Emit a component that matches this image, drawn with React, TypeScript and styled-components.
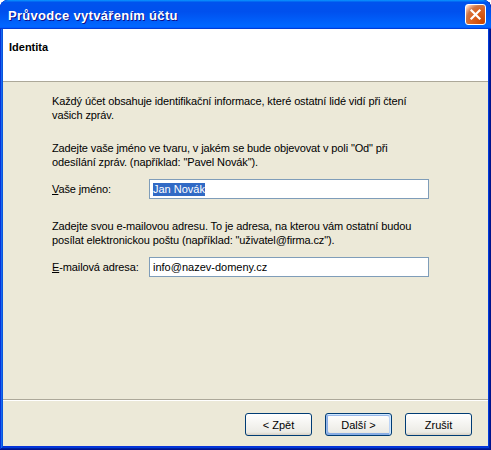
import React from "react";
import styled, { createGlobalStyle } from "styled-components";

const GlobalStyle = createGlobalStyle`
  html, body {
    margin: 0;
    padding: 0;
    background: #ffffff;
  }
  body {
    font-family: "Liberation Sans", Arial, sans-serif;
    font-size: 11px;
  }
`;

const Window = styled.div`
  width: 491px;
  height: 450px;
  box-sizing: border-box;
  display: flex;
  flex-direction: column;
  background: #0831d9;
  border-radius: 8px 8px 0 0;
  overflow: hidden;
  box-shadow: inset -1px -1px #00138c, inset 1px 1px #0831d9,
    inset -2px -2px #001ea0, inset 2px 2px #166aee, inset -3px -3px #003bda,
    inset 3px 3px #0855dd;
  padding-bottom: 4px;
`;

const TitleBar = styled.div`
  height: 29px;
  flex: none;
  display: flex;
  align-items: center;
  justify-content: space-between;
  padding: 0 5px 0 8px;
  background: linear-gradient(
    180deg,
    #0997ff,
    #0053ee 8%,
    #0050ee 40%,
    #06f 88%,
    #06f 93%,
    #005bff 95%,
    #003dd7 96%,
    #003dd7
  );
  border-radius: 8px 8px 0 0;
`;

const TitleText = styled.span`
  color: #ffffff;
  font-family: "Liberation Sans", Arial, sans-serif;
  font-weight: bold;
  font-size: 13px;
  letter-spacing: 0.3px;
  text-shadow: 1px 1px #0f1089;
  margin-top: 1px;
`;

const CloseButton = styled.button`
  width: 21px;
  height: 21px;
  padding: 0;
  display: flex;
  align-items: center;
  justify-content: center;
  border: 1px solid #ffffff;
  border-radius: 3px;
  background: radial-gradient(
    circle at 90% 90%,
    #cc4600 0%,
    #dc6527 55%,
    #cd7546 70%,
    #ffccb2 90%,
    #ffffff 100%
  );
  box-sizing: border-box;
`;

const Client = styled.div`
  flex: 1;
  margin: 0 3px;
  display: flex;
  flex-direction: column;
  background: #ece9d8;
`;

const Header = styled.div`
  height: 52px;
  box-sizing: content-box;
  background: #ffffff;
  border-bottom: 1px solid #aca899;
  padding: 0 6px;
  display: flex;
  align-items: flex-start;
`;

const HeaderTitle = styled.div`
  margin-top: 11px;
  line-height: 14px;
  font-weight: bold;
  font-size: 11px;
  color: #000000;
`;

const Body = styled.div`
  flex: 1;
  padding: 12px 0 0 49px;
  display: flex;
  flex-direction: column;
`;

const Paragraph = styled.p<{ $after: number }>`
  margin: 0 0 ${(p) => p.$after}px;
  line-height: 14px;
  color: #000000;
  letter-spacing: -0.12px;
`;

const FieldRow = styled.div<{ $after: number }>`
  display: flex;
  align-items: center;
  margin-bottom: ${(p) => p.$after}px;
`;

const Label = styled.label`
  width: 97px;
  flex: none;
  color: #000000;
  letter-spacing: -0.12px;
`;

const Key = styled.span`
  text-decoration: underline;
  text-underline-offset: 1px;
`;

const TextBox = styled.div`
  width: 280px;
  height: 20px;
  box-sizing: border-box;
  border: 1px solid #7f9db9;
  background: #ffffff;
  display: flex;
  align-items: center;
  padding-left: 3px;
  color: #000000;
`;

const Selected = styled.span`
  background: #316ac5;
  color: #ffffff;
  line-height: 13px;
`;

const Footer = styled.div`
  flex: none;
  height: 47px;
  border-top: 1px solid #aca899;
  box-shadow: inset 0 1px #ffffff;
  display: flex;
  justify-content: flex-end;
  align-items: flex-start;
  gap: 13px;
  padding: 13px 16px 0 0;
  box-sizing: border-box;
`;

const Button = styled.button<{ $default?: boolean }>`
  width: 67px;
  height: 23px;
  box-sizing: border-box;
  padding: 0;
  font-family: "Liberation Sans", Arial, sans-serif;
  font-size: 11px;
  color: #000000;
  border: 1px solid #003c74;
  border-radius: 3px;
  background: linear-gradient(180deg, #ffffff, #ecebe5 86%, #d8d0c4);
  box-shadow: ${(p) =>
    p.$default
      ? "inset -1px 1px #cee7ff, inset 1px 2px #98b8ea, inset -2px 2px #bcd4f6, inset 1px -1px #89ade4, inset 2px -2px #89ade4"
      : "none"};
`;

export default function App() {
  return (
    <>
      <GlobalStyle />
      <Window>
        <TitleBar>
          <TitleText>Průvodce vytvářením účtu</TitleText>
          <CloseButton aria-label="Zavřít">
            <svg width="13" height="13" viewBox="0 0 13 13">
              <path
                d="M2.5 2.5 L10.5 10.5 M10.5 2.5 L2.5 10.5"
                stroke="#ffffff"
                strokeWidth="2.2"
                strokeLinecap="square"
              />
            </svg>
          </CloseButton>
        </TitleBar>
        <Client>
          <Header>
            <HeaderTitle>Identita</HeaderTitle>
          </Header>
          <Body>
            <Paragraph $after={19}>
              Každý účet obsahuje identifikační informace, které ostatní lidé vidí při čtení
              <br />
              vašich zpráv.
            </Paragraph>
            <Paragraph $after={10}>
              Zadejte vaše jméno ve tvaru, v jakém se bude objevovat v poli "Od" při
              <br />
              odesílání zpráv. (například: "Pavel Novák").
            </Paragraph>
            <FieldRow $after={20}>
              <Label>
                <Key>V</Key>aše jméno:
              </Label>
              <TextBox>
                <Selected>Jan Novák</Selected>
              </TextBox>
            </FieldRow>
            <Paragraph $after={10}>
              Zadejte svou e-mailovou adresu. To je adresa, na kterou vám ostatní budou
              <br />
              posílat elektronickou poštu (například: "uživatel@firma.cz").
            </Paragraph>
            <FieldRow $after={0}>
              <Label>
                <Key>E</Key>-mailová adresa:
              </Label>
              <TextBox>info@nazev-domeny.cz</TextBox>
            </FieldRow>
          </Body>
          <Footer>
            <Button>&lt; Zpět</Button>
            <Button $default>Další &gt;</Button>
            <Button>Zrušit</Button>
          </Footer>
        </Client>
      </Window>
    </>
  );
}
